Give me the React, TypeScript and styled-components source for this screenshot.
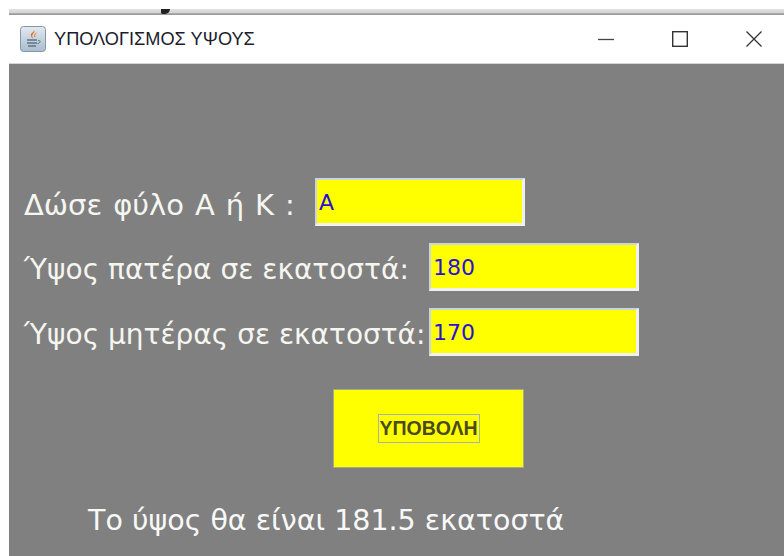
import React from 'react';
import styled, { createGlobalStyle } from 'styled-components';

const GlobalStyle = createGlobalStyle`
  html, body {
    margin: 0;
    padding: 0;
    background: #fff;
  }
  * {
    box-sizing: border-box;
  }
`;

const fields = [
  { label: 'Δώσε φύλο Α ή Κ :', value: 'A', labelWidth: 291, labelSize: 29, wordGap: 1.75 },
  { label: 'Ύψος πατέρα σε εκατοστά:', value: '180', labelWidth: 405, labelSize: 28, wordGap: 0 },
  { label: 'Ύψος μητέρας σε εκατοστά:', value: '170', labelWidth: 405, labelSize: 28, wordGap: 0 },
];

function JavaIcon() {
  return (
    <svg width="26" height="26" viewBox="0 0 26 26">
      <defs>
        <linearGradient id="tile" x1="0" y1="0" x2="0" y2="1">
          <stop offset="0" stopColor="#e4e9ef" />
          <stop offset="1" stopColor="#a9bccd" />
        </linearGradient>
      </defs>
      <rect x="0.5" y="0.5" width="25" height="25" rx="3" fill="url(#tile)" stroke="#7f98ad" />
      <path d="M14 4c2 3-3 4-1.500 7 0.500 1 1 1.500 1 1.500-3-1.500-3.500-4-1.500-5.500 1-1 2-1.500 2-3z" fill="#e2702a" />
      <path d="M16.500 7c-1.500 1-2.500 2-1.500 4" fill="none" stroke="#e2702a" strokeWidth="1" />
      <path d="M7 14h10M7 17h10M8 20h8" stroke="#5d7488" strokeWidth="1.400" fill="none" />
      <path d="M18 14.500c3-0.500 3 2.500-0.500 3" stroke="#5d7488" strokeWidth="1" fill="none" />
    </svg>
  );
}

export default function App() {
  return (
    <>
      <GlobalStyle />
      <Page>
        <TopEdge>
          <StrayMark />
        </TopEdge>
        <TitleBar>
          <TitleGroup>
            <JavaIcon />
            <Title>ΥΠΟΛΟΓΙΣΜΟΣ ΥΨΟΥΣ</Title>
          </TitleGroup>
          <WindowButtons>
            <WindowButton aria-label="minimize">
              <svg width="16" height="16" viewBox="0 0 16 16">
                <path d="M0 8.500h16" stroke="#444" strokeWidth="1.300" />
              </svg>
            </WindowButton>
            <WindowButton aria-label="maximize">
              <svg width="16" height="16" viewBox="0 0 16 16">
                <rect x="0.700" y="0.700" width="14.600" height="14.600" fill="none" stroke="#333" strokeWidth="1.400" />
              </svg>
            </WindowButton>
            <WindowButton aria-label="close">
              <svg width="16" height="16" viewBox="0 0 16 16">
                <path d="M0.500 0.500l15 15M15.500 0.500l-15 15" stroke="#333" strokeWidth="1.300" />
              </svg>
            </WindowButton>
          </WindowButtons>
        </TitleBar>
        <Content>
          {fields.map((field) => (
            <FieldRow key={field.label}>
              <FieldLabel $width={field.labelWidth} $size={field.labelSize} $wordGap={field.wordGap}>
                {field.label}
              </FieldLabel>
              <FieldInput readOnly value={field.value} />
            </FieldRow>
          ))}
          <SubmitPanel>
            <SubmitLabel>ΥΠΟΒΟΛΗ</SubmitLabel>
          </SubmitPanel>
          <Result>Το ύψος θα είναι 181.5 εκατοστά</Result>
        </Content>
      </Page>
    </>
  );
}

const Page = styled.div`
  width: 784px;
  height: 556px;
  padding: 9px 0 0 9px;
  overflow: hidden;
  background: #fff;
  display: flex;
  flex-direction: column;
`;

const TopEdge = styled.div`
  position: relative;
  height: 6px;
  background: linear-gradient(#e2e2e2 0, #d4d4d4 60%, #8f8f8f 85%, #a8a8a8 100%);
`;

const StrayMark = styled.span`
  position: absolute;
  left: 152px;
  top: 0;
  width: 9px;
  height: 5px;
  background: #222;
  border-radius: 0 0 6px 2px;
`;

const TitleBar = styled.div`
  height: 49px;
  display: flex;
  align-items: center;
  justify-content: space-between;
  background: #fff;
  border-bottom: 1px solid #d6d6d6;
  padding: 0 22px 0 11px;
`;

const TitleGroup = styled.div`
  display: flex;
  align-items: center;
  gap: 8px;
`;

const Title = styled.span`
  font-family: 'Liberation Sans', Arial, sans-serif;
  font-size: 18.200px;
  color: #1c1c2c;
`;

const WindowButtons = styled.div`
  display: flex;
  align-items: center;
  gap: 58px;
`;

const WindowButton = styled.div`
  width: 16px;
  height: 16px;
  display: flex;
`;

const Content = styled.div`
  flex: 1;
  background: #808080;
  padding: 114px 0 0 15px;
  display: flex;
  flex-direction: column;
  font-family: 'DejaVu Sans', sans-serif;
`;

const FieldRow = styled.div`
  display: flex;
  align-items: center;
  height: 48px;
  margin-bottom: 17px;
`;

const FieldLabel = styled.span<{ $width: number; $size: number; $wordGap: number }>`
  width: ${(p) => p.$width}px;
  flex: none;
  padding-top: 5px;
  font-size: ${(p) => p.$size}px;
  word-spacing: ${(p) => p.$wordGap}px;
  color: #f6f6f0;
  white-space: pre;
`;

const FieldInput = styled.input`
  width: 210px;
  height: 48px;
  padding: 2px 0 0 2px;
  border-style: solid;
  border-width: 2px 3px 3px 2px;
  border-color: #c9d6e2 #eef0f2 #eef0f2 #c9d6e2;
  outline: none;
  background: #ffff00;
  color: #2a10d8;
  font-family: 'DejaVu Sans', sans-serif;
  font-size: 22px;
`;

const SubmitPanel = styled.div`
  width: 191px;
  height: 79px;
  margin: 16px 0 0 309px;
  flex: none;
  background: #ffff00;
  border: 1px solid #a3aa8a;
  display: flex;
  align-items: center;
  justify-content: center;
`;

const SubmitLabel = styled.span`
  width: 102px;
  height: 29px;
  border: 1px solid #a5b0b8;
  display: flex;
  align-items: center;
  justify-content: center;
  font-family: 'Liberation Sans', sans-serif;
  font-size: 19.500px;
  font-weight: 700;
  color: #4a4a20;
`;

const Result = styled.div`
  margin: 36px 0 0 64px;
  font-size: 28.500px;
  color: #f8f8f8;
  white-space: nowrap;
`;
